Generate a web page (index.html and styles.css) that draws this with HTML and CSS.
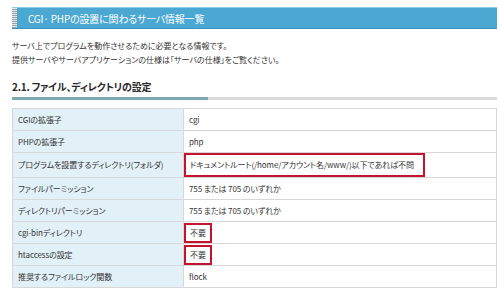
FILE: index.html
```html
<!DOCTYPE html>
<html lang="ja">
<head>
<meta charset="utf-8">
<link rel="stylesheet" href="styles.css">
</head>
<body>
<div class="page">
  <h1 class="title"><span class="title-text">CGI· PHPの設置に関わるサーバ情報一覧</span></h1>
  <p class="lead">サーバ上でプログラムを動作させるために必要となる情報です。<br>提供サーバやサーバアプリケーションの仕様は「サーバの仕様」をご覧ください。</p>
  <h2 class="section">2.1. ファイル、ディレクトリの設定</h2>
  <table class="spec">
    <tr><th>CGIの拡張子</th><td>cgi</td></tr>
    <tr><th>PHPの拡張子</th><td>php</td></tr>
    <tr><th>プログラムを設置するディレクトリ(フォルダ)</th><td><span class="mark wide">ドキュメントルート(/home/アカウント名/www/)以下であれば不問</span></td></tr>
    <tr><th>ファイルパーミッション</th><td>755 または 705 のいずれか</td></tr>
    <tr><th>ディレクトリパーミッション</th><td>755 または 705 のいずれか</td></tr>
    <tr><th>cgi-binディレクトリ</th><td><span class="mark">不要</span></td></tr>
    <tr><th>htaccessの設定</th><td><span class="mark">不要</span></td></tr>
    <tr><th>推奨するファイルロック関数</th><td>flock</td></tr>
  </table>
</div>
</body>
</html>
```
FILE: styles.css
```css
html, body {
  margin: 0;
  padding: 0;
  background: #fff;
}
body {
  font-family: "Noto Sans CJK JP", "Noto Sans", sans-serif;
  font-feature-settings: "palt";
  color: #333;
}
.page {
  width: 485px;
  padding: 7px 0 0 12px;
}
.title {
  margin: 0;
  height: 22px;
  display: flex;
  align-items: center;
  background: #4aa8d2;
  border-top: 1px solid #8fcbe6;
  border-bottom: 1px solid #3b93bb;
  box-sizing: border-box;
  padding-left: 16px;
  position: relative;
  font-size: 10px;
  letter-spacing: -0.2px;
  font-weight: normal;
  color: #fff;
}
.title::before {
  content: "";
  position: absolute;
  left: 0;
  top: 0;
  bottom: 0;
  width: 5px;
  background-color: #d8dde0;
  background-image: repeating-linear-gradient(0deg, #9aa4aa 0 1px, transparent 1px 2px),
                    repeating-linear-gradient(90deg, #eef1f2 0 1px, transparent 1px 2px);
}
.lead {
  margin: 10px 0 0;
  font-size: 8px;
  line-height: 14px;
  color: #333;
}
.section {
  margin: 13px 0 0;
  font-size: 10px;
  letter-spacing: -0.2px;
  font-weight: bold;
  color: #2a2a2a;
  line-height: 14px;
  padding-bottom: 3px;
  border-bottom: 3px solid #dadada;
  position: relative;
}
.section::after {
  content: "";
  position: absolute;
  left: 0;
  bottom: -3px;
  width: 196px;
  height: 3px;
  background: #7fa8b3;
}
.spec {
  margin-top: 8px;
  width: 485px;
  border-collapse: collapse;
  font-size: 8px;
  letter-spacing: -0.1px;
}
.spec th, .spec td {
  height: 21px;
  padding: 0 0 0 5px;
  border: 1px solid #d8d8d8;
  text-align: left;
  font-weight: normal;
  vertical-align: middle;
  color: #333;
  line-height: 12px;
}
.spec th {
  width: 165px;
  background: #e2f0f7;
}
.spec td {
  background: #fff;
}
.mark {
  display: inline-block;
  margin-left: -5px;
  padding: 1px 4px;
  border: 2px solid #c4122f;
  line-height: 14px;
}
.mark.wide {
  padding: 3px 9px 3px 4px;
}
```
